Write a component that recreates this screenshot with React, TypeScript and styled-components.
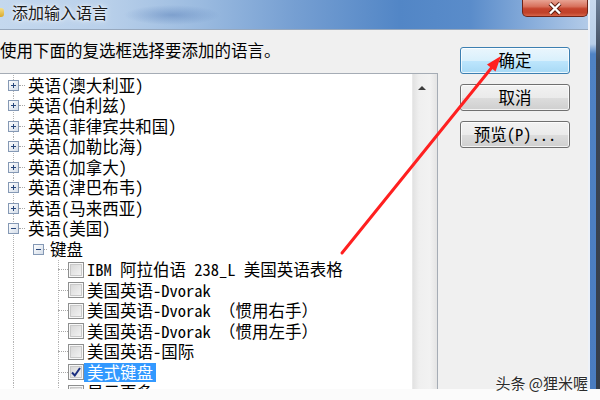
import React from "react";
import styled, { createGlobalStyle } from "styled-components";

const mono = `"Noto Sans Mono CJK SC", "Noto Sans CJK SC", monospace`;
const sans = `"Noto Sans CJK SC", "Noto Sans", sans-serif`;

const GlobalStyle = createGlobalStyle`
  html, body {
    margin: 0;
    padding: 0;
    background: #fbfbfb;
  }
  body {
    width: 600px;
    height: 400px;
    overflow: hidden;
    font-family: ${mono};
  }
`;

const Page = styled.div`
  position: relative;
  width: 600px;
  height: 400px;
  overflow: hidden;
  background: #fbfbfb;
  display: flex;
  flex-direction: column;
`;

const Window = styled.div`
  display: flex;
  height: 389px;
  flex: none;
`;

const Main = styled.div`
  width: 588px;
  display: flex;
  flex-direction: column;
`;

const TitleBar = styled.div`
  height: 29px;
  flex: none;
  display: flex;
  align-items: flex-start;
  background:
    radial-gradient(ellipse 48px 10px at 172px 15px, rgba(80, 120, 180, 0.45), transparent),
    linear-gradient(to right, #c4d8ee 0%, #b9d0ea 18%, #9bbbe0 34%, #769fd2 50%, #5286c6 68%, #5a8cca 80%, #8fb2dd 92%, #b3cbe8 100%);
`;

const AppIcon = styled.span`
  width: 4px;
  height: 9px;
  margin-top: 8px;
  background: linear-gradient(#f6e08a, #d9a92a);
  border-radius: 0 3px 3px 0;
`;

const Title = styled.div`
  margin-left: 8px;
  font-family: ${sans};
  font-size: 16px;
  line-height: 24px;
  color: #1a1a1a;
  text-shadow: 0 0 6px rgba(255, 255, 255, 0.95), 0 0 3px rgba(255, 255, 255, 0.9);
`;

const CloseButton = styled.div`
  margin-left: auto;
  width: 66px;
  height: 17px;
  box-sizing: border-box;
  border: 1px solid #6e2418;
  border-top: none;
  border-radius: 0 0 5px 5px;
  background: linear-gradient(#e8a393 0%, #d8725d 40%, #c5432c 55%, #c0422a 80%, #d7654a 100%);
  display: flex;
  align-items: center;
  justify-content: center;
`;

const Frame = styled.div`
  width: 12px;
  display: flex;
`;

const FrameInner = styled.span`
  width: 2px;
  background: #eef2f8;
`;

const FrameMid = styled.span`
  width: 6px;
  background: linear-gradient(#c8daef 0, #b9cfe9 44px, #4f82c4 54px, #4a7cc0 100%);
`;

const FrameOuter = styled.span`
  flex: 1;
  background: linear-gradient(#6c7f98 0, #3c4656 60px, #353d49 100%);
`;

const Body = styled.div`
  flex: 1;
  min-height: 0;
  display: flex;
  background: #f0f0f0;
  border-top: 1px solid #97a8bd;
  overflow: hidden;
`;

const LeftCol = styled.div`
  width: 438px;
  display: flex;
  flex-direction: column;
  padding-top: 9px;
`;

const Hint = styled.div`
  font-size: 16.5px;
  line-height: 22px;
  color: #000;
  white-space: nowrap;
`;

const ListBox = styled.div`
  margin-top: 12px;
  margin-left: -1px;
  flex: 1;
  display: flex;
  background: #fff;
  border: 1px solid #a5acb5;
  border-bottom: none;
  overflow: hidden;
`;

const Tree = styled.div`
  flex: 1;
  padding-top: 1px;
  display: flex;
  flex-direction: column;
`;

const ScrollBar = styled.div`
  width: 24px;
  border-left: 1px solid #e9e9e9;
  background: linear-gradient(to right, #e2e2e2, #efefef 25%, #f2f2f2 70%, #e4e4e4);
  display: flex;
  flex-direction: column;
  align-items: center;
`;

const ScrollArrow = styled.span`
  margin-top: 12px;
  margin-left: -7px;
  width: 0;
  height: 0;
  border-left: 4px solid transparent;
  border-right: 4px solid transparent;
  border-bottom: 4px solid #3c3c3c;
`;

const Row = styled.div<{ $indent: number; $lines: number[] }>`
  height: 20.5px;
  flex: none;
  display: flex;
  align-items: center;
  padding-left: ${(p) => p.$indent}px;
  background-image: ${(p) =>
    p.$lines.length
      ? p.$lines.map(() => "linear-gradient(#b4b4b4 50%, transparent 50%)").join(", ")
      : "none"};
  background-size: 1px 2px;
  background-repeat: repeat-y;
  background-position: ${(p) => p.$lines.map((x) => `${x}px 0`).join(", ") || "0 0"};
`;

const Dash = styled.span<{ $w: number }>`
  width: ${(p) => p.$w}px;
  height: 0;
  border-top: 1px dotted #a8a8a8;
  flex: none;
`;

const CheckBox = styled.span`
  width: 16px;
  height: 16px;
  box-sizing: border-box;
  flex: none;
  border: 1px solid #8e8f8f;
  box-shadow: inset 0 0 0 1px #f8f8f8, inset 0 0 0 2px #c9c9c9;
  background-image: linear-gradient(135deg, #d4d4d4, #f7f7f7);
  display: flex;
  align-items: center;
  justify-content: center;
`;

const Label = styled.span<{ $selected?: boolean }>`
  font-size: 16.5px;
  line-height: 19px;
  padding: 0 3px;
  white-space: nowrap;
  color: ${(p) => (p.$selected ? "#fff" : "#000")};
  background: ${(p) => (p.$selected ? "#3399ff" : "transparent")};
`;

const RightCol = styled.div`
  margin-left: 22px;
  padding-top: 17px;
  display: flex;
  flex-direction: column;
  gap: 10px;
`;

const Button = styled.div<{ $primary?: boolean }>`
  width: 110px;
  height: 27px;
  box-sizing: border-box;
  border: 1px solid ${(p) => (p.$primary ? "#3c7fb1" : "#707070")};
  border-radius: 3px;
  background: ${(p) =>
    p.$primary
      ? "linear-gradient(#eaf6fd 0%, #d9f0fc 50%, #bee6fd 51%, #a7d9f5 100%)"
      : "linear-gradient(#f2f2f2 0%, #ebebeb 50%, #dddddd 51%, #cfcfcf 100%)"};
  box-shadow: inset 0 0 0 1px rgba(255, 255, 255, 0.75);
  font-size: 16.5px;
  line-height: 25px;
  text-align: center;
  color: #000;
`;

const Footer = styled.div`
  flex: 1;
  background: #fbfbfb;
`;

const Watermark = styled.div`
  position: absolute;
  right: 12px;
  bottom: 7px;
  font-family: ${sans};
  font-size: 15px;
  line-height: 20px;
  color: #2b2b2b;
  text-shadow: 0 0 2px #fff, 0 0 3px #fff;
  white-space: nowrap;
`;

const Overlay = styled.svg`
  position: absolute;
  left: 0;
  top: 0;
  pointer-events: none;
`;

type Node = {
  level: 0 | 1 | 2;
  text: string;
  open?: boolean;
  checked?: boolean;
  selected?: boolean;
};

const nodes: Node[] = [
  { level: 0, text: "英语(澳大利亚)" },
  { level: 0, text: "英语(伯利兹)" },
  { level: 0, text: "英语(菲律宾共和国)" },
  { level: 0, text: "英语(加勒比海)" },
  { level: 0, text: "英语(加拿大)" },
  { level: 0, text: "英语(津巴布韦)" },
  { level: 0, text: "英语(马来西亚)" },
  { level: 0, text: "英语(美国)", open: true },
  { level: 1, text: "键盘", open: true },
  { level: 2, text: "IBM 阿拉伯语 238_L 美国英语表格" },
  { level: 2, text: "美国英语-Dvorak" },
  { level: 2, text: "美国英语-Dvorak （惯用右手）" },
  { level: 2, text: "美国英语-Dvorak （惯用左手）" },
  { level: 2, text: "美国英语-国际" },
  { level: 2, text: "美式键盘", checked: true, selected: true },
  { level: 2, text: "显示更多..." },
];

function Expander({ open }: { open?: boolean }) {
  return (
    <svg width="11" height="11" viewBox="0 0 11 11" style={{ flex: "none" }}>
      <defs>
        <linearGradient id="exp" x1="0" y1="0" x2="1" y2="1">
          <stop offset="0" stopColor="#ffffff" />
          <stop offset="1" stopColor="#d3dce8" />
        </linearGradient>
      </defs>
      <rect x="0.5" y="0.5" width="10" height="10" fill="url(#exp)" stroke="#8599b5" />
      <line x1="3" y1="5.5" x2="8" y2="5.5" stroke="#27467a" />
      {!open && <line x1="5.5" y1="3" x2="5.5" y2="8" stroke="#27467a" />}
    </svg>
  );
}

function TreeRow({ node }: { node: Node }) {
  if (node.level === 2) {
    return (
      <Row $indent={58} $lines={[13, 58]}>
        <Dash $w={10} />
        <CheckBox>
          {node.checked && (
            <svg width="12" height="12" viewBox="0 0 12 12">
              <path d="M2 6.5 L4.8 9.5 L10 2" fill="none" stroke="#1b2f80" strokeWidth="2" />
            </svg>
          )}
        </CheckBox>
        <Label $selected={node.selected}>{node.text}</Label>
      </Row>
    );
  }
  const indent = node.level === 0 ? 8 : 33;
  return (
    <Row $indent={indent} $lines={[13]}>
      <Expander open={node.open} />
      <Dash $w={node.level === 0 ? 6 : 3} />
      <Label>{node.text}</Label>
    </Row>
  );
}

export default function App() {
  return (
    <>
      <GlobalStyle />
      <Page>
        <Window>
          <Main>
            <TitleBar>
              <AppIcon />
              <Title>添加输入语言</Title>
              <CloseButton>
                <svg width="16" height="13" viewBox="0 0 16 13">
                  <path d="M3 1.5 L13 11.5 M13 1.5 L3 11.5" stroke="#5a1d12" strokeWidth="4.2" />
                  <path d="M3 1.5 L13 11.5 M13 1.5 L3 11.5" stroke="#ffffff" strokeWidth="2.4" />
                </svg>
              </CloseButton>
            </TitleBar>
            <Body>
              <LeftCol>
                <Hint>使用下面的复选框选择要添加的语言。</Hint>
                <ListBox>
                  <Tree>
                    {nodes.map((n, i) => (
                      <TreeRow key={i} node={n} />
                    ))}
                  </Tree>
                  <ScrollBar>
                    <ScrollArrow />
                  </ScrollBar>
                </ListBox>
              </LeftCol>
              <RightCol>
                <Button $primary>确定</Button>
                <Button>取消</Button>
                <Button>预览(P)...</Button>
              </RightCol>
            </Body>
          </Main>
          <Frame>
            <FrameInner />
            <FrameMid />
            <FrameOuter />
          </Frame>
        </Window>
        <Footer />
        <Watermark>头条 @狸米喔</Watermark>
        <Overlay width="600" height="400" viewBox="0 0 600 400">
          <line x1="342" y1="253" x2="493" y2="66" stroke="#ff2020" strokeWidth="3" strokeLinecap="round" />
          <polygon points="501,56 495.5,71.5 487,64.5" fill="#ff2020" />
        </Overlay>
      </Page>
    </>
  );
}
